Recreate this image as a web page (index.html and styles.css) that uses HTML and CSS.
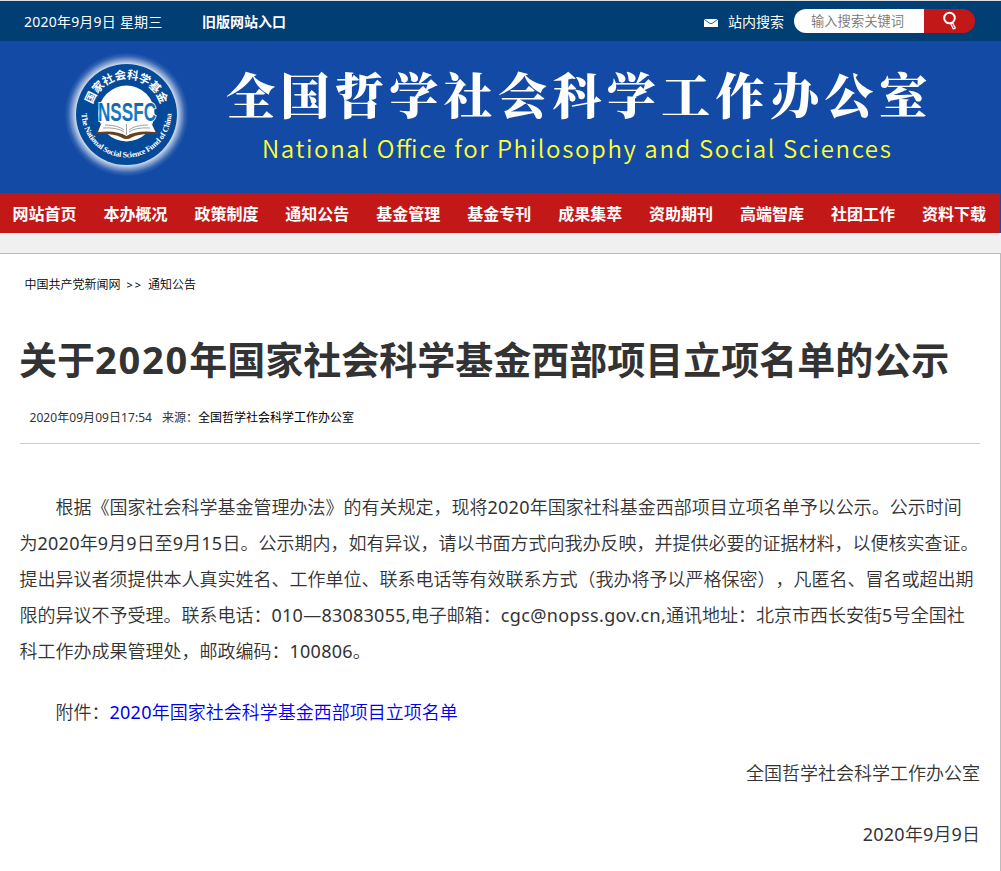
FILE: index.html
```
<!DOCTYPE html>
<html lang="zh-CN">
<head>
<meta charset="utf-8">
<title>全国哲学社会科学工作办公室</title>
<link rel="stylesheet" href="styles.css">
</head>
<body>
<div class="topbar">
  <span class="date">2020年9月9日 星期三</span>
  <a class="old-site">旧版网站入口</a>
  <div class="search">
    <svg class="mail" width="14" height="8" viewBox="0 0 14 8"><path fill="#fff" d="M0 0h14v8H0z"/><path d="M0 .2l5.200 3.800q1.800 1.200 3.600 0L14 .2" fill="none" stroke="#2c5b86" stroke-width="1"/></svg>
    <span class="search-label">站内搜索</span>
    <span class="search-input">输入搜索关键词</span>
    <span class="search-btn"><svg width="16" height="20" viewBox="0 0 16 20"><circle cx="7.500" cy="7" r="5.300" fill="none" stroke="#fff" stroke-width="2"/><path d="M9.300 11.500l3.300 6.500" stroke="#fff" stroke-width="3.400"/><path d="M10 13l2 4" stroke="#c31818" stroke-width=".9"/></svg></span>
  </div>
</div>
<header class="banner">
  <svg class="logo" width="140" height="140" viewBox="0 0 140 140">
    <defs>
      <radialGradient id="glow"><stop offset=".8" stop-color="#fff" stop-opacity=".9"/><stop offset=".87" stop-color="#fff" stop-opacity=".5"/><stop offset=".94" stop-color="#fff" stop-opacity=".14"/><stop offset="1" stop-color="#fff" stop-opacity="0"/></radialGradient>
      <linearGradient id="ink" x2="0" y2="1"><stop stop-color="#0a4a94"/><stop offset=".5" stop-color="#1b82c8"/><stop offset="1" stop-color="#0b58a5"/></linearGradient>
      <path id="arcTop" d="M31 69.500a35.500 35.500 0 0 1 71 0"/>
      <path id="arcBottom" d="M21.500 67.500a45 45 0 0 0 90 0"/>
    </defs>
    <circle cx="66.500" cy="69.500" r="62" fill="url(#glow)"/>
    <circle cx="66.500" cy="69.500" r="50.500" fill="#044a98"/>
    <circle cx="66.500" cy="68.500" r="28" fill="#fff"/>
    <text class="ring-cn"><textPath href="#arcTop" startOffset="50%" text-anchor="middle" textLength="91">国家社会科学基金</textPath></text>
    <text class="ring-en"><textPath href="#arcBottom" startOffset="50%" text-anchor="middle" textLength="139">The National Social Science Fund of China</textPath></text>
    <path d="M41 78l-5.500 11q17-1 26 3.500q5 3 10 0q9-4.500 26-3.500l-6.500-11q-17-1-24 4q-9-5-26-4z" fill="#65401f"/>
    <path d="M42 76.500l-4 10.500q19-2 28.500 4Q76 85 95.500 87l-5-10.500q-17-1-24 4Q59 75.500 42 76.500z" fill="#fff"/>
    <path d="M45 80q13 0 19 5M43 83q14-1 21 4M88 80q-13 0-19 5M90 83q-14-1-21 4M66.500 79v11" fill="none" stroke="#777" stroke-width=".7"/>
    <text class="nssfc" x="38" y="76" textLength="58" lengthAdjust="spacingAndGlyphs">NSSFC</text>
  </svg>
  <div class="names">
    <h1>全国哲学社会科学工作办公室</h1>
    <p>National O<span class="lig">ff</span>ice for Philosophy and Social Sciences</p>
  </div>
</header>
<nav class="nav">
  <a>网站首页</a><a>本办概况</a><a>政策制度</a><a>通知公告</a><a>基金管理</a><a>基金专刊</a><a>成果集萃</a><a>资助期刊</a><a>高端智库</a><a>社团工作</a><a>资料下载</a>
</nav>
<main class="page">
  <div class="crumbs"><a>中国共产党新闻网</a><span class="sep">&gt;&gt;</span><a>通知公告</a></div>
  <h2>关于<span class="num">2020</span>年国家社会科学基金西部项目立项名单的公示</h2>
  <div class="meta"><span class="time">2020年09月09日17:54</span><span>来源：<a>全国哲学社会科学工作办公室</a></span></div>
  <div class="body">
    <p><span class="line first">根据《国家社会科学基金管理办法》的有关规定，现将<span class="n">2020</span>年国家社科基金西部项目立项名单予以公示。公示时间</span>
    <span class="line">为<span class="n">2020</span>年<span class="n">9</span>月<span class="n">9</span>日至<span class="n">9</span>月<span class="n">15</span>日。公示期内，如有异议，请以书面方式向我办反映，并提供必要的证据材料，以便核实查证。</span>
    <span class="line">提出异议者须提供本人真实姓名、工作单位、联系电话等有效联系方式（我办将予以严格保密），凡匿名、冒名或超出期</span>
    <span class="line">限的异议不予受理。联系电话：<span class="n">010—83083055,</span>电子邮箱：<span class="n mail-addr">cgc@nopss.gov.cn,</span>通讯地址：北京市西长安街<span class="n">5</span>号全国社</span>
    <span class="line">科工作办成果管理处，邮政编码：<span class="n">100806</span>。</span></p>
    <p><span class="line first">附件：<a class="link"><span class="n">2020</span>年国家社会科学基金西部项目立项名单</a></span></p>
    <p class="right">全国哲学社会科学工作办公室</p>
    <p class="right"><span class="n">2020</span>年<span class="n">9</span>月<span class="n">9</span>日</p>
  </div>
</main>
</body>
</html>
```
FILE: styles.css
```
* { box-sizing: border-box; }
body {
  margin: 0;
  background: #f0f0f0;
  color: #333;
  font-family: "Noto Sans", "Noto Sans CJK SC", sans-serif;
  text-spacing-trim: space-all;
  overflow: hidden;
}
h1, h2, p { margin: 0; }
.topbar {
  height: 41px;
  border-top: 1px solid #d9dfe3;
  background: #003e74;
  color: #fff;
  display: flex;
  align-items: center;
  padding: 0 26px 0 24px;
  font-size: 14px;
  white-space: nowrap;
}
.date { width: 178px; letter-spacing: .22px; }
.old-site { font-weight: bold; }
.search { margin-left: auto; display: flex; align-items: center; }
.mail { margin-top: 4px; }
.search-label { margin: 0 10px; }
.search-input {
  width: 130px; height: 24px; padding-left: 17px;
  background: #fff; color: #757575;
  border-radius: 12px 0 0 12px;
  font-size: 13.3px; font-weight: 350; line-height: 24px;
}
.search-btn {
  width: 51px; height: 24px;
  background: #c31818;
  border-radius: 0 12px 12px 0;
  display: flex; align-items: center; justify-content: center;
}
.banner {
  height: 152px;
  background: #124aa5;
  display: flex;
  padding-left: 60px;
}
.logo { margin-top: 4px; flex: none; }
.ring-cn { font: 700 11.5px "Noto Sans CJK SC", sans-serif; fill: #fff; }
.ring-en { font: bold 8px "Liberation Serif", serif; fill: #fff; }
.nssfc {
  font: bold 26px "Liberation Sans", sans-serif;
  fill: url(#ink);
  stroke: #fff; stroke-width: 2px; paint-order: stroke;
}
.names { padding-left: 26px; white-space: nowrap; color: #fff; }
h1 {
  font: 900 49px/70px "Noto Serif CJK SC", "Noto Sans CJK SC", serif;
  letter-spacing: 5.4px;
  padding-top: 17px;
}
.names p {
  font: 350 24px/36px "Noto Sans CJK SC", sans-serif;
  letter-spacing: 1.63px;
  color: #ff3;
  padding: 2px 0 0 36px;
}
.names .lig { letter-spacing: 0; }
.nav {
  height: 40px;
  background: #c31818;
  border-right: 1px solid #124aa5;
  display: flex;
  justify-content: space-between;
  padding: 1px 14px 0 12.5px;
  color: #fff;
  font-size: 16px; font-weight: bold; line-height: 40px;
}
.page {
  margin-top: 20px;
  height: 618px;
  background: #fff;
  border-top: 1px solid #bbb;
  border-right: 1px solid #bbb;
  padding: 21px 20px 0;
}
.crumbs { padding-left: 4.5px; font-size: 12px; font-weight: 350; line-height: 20px; color: #000; }
.sep { margin: 0 5px 0 6px; font-size: 11px; font-weight: 400; letter-spacing: 2px; }
h2 { margin: 34px 0 0 -1px; font-size: 38px; line-height: 60px; white-space: nowrap; }
.num { letter-spacing: 1.8px; }
.meta {
  margin-top: 17px; height: 38px; padding-left: 9.5px;
  border-bottom: 1px solid #ccc;
  display: flex; gap: 10px;
  font-size: 12px; line-height: 24px;
}
.time { letter-spacing: .06px; }
.meta a { color: #000; }
.body { padding-top: 45px; font-size: 18px; font-weight: 350; line-height: 36px; }
.body p { margin-bottom: 25px; }
.line { display: block; margin-left: -.5px; white-space: nowrap; }
.first { padding-left: 36px; }
.n { font-weight: 400; letter-spacing: .25px; }
.mail-addr { letter-spacing: .36px; }
.link { color: #00e; }
.right { text-align: right; }
```
